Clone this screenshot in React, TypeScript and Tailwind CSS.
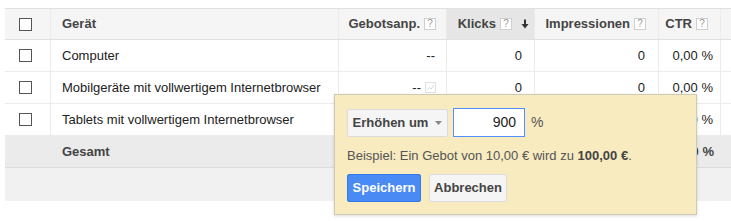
import React from 'react';

const font = { fontFamily: '"Liberation Sans", Arial, sans-serif' };

function Help() {
  return (
    <span className="ml-[4px] inline-flex h-[12px] w-[12px] items-center justify-center border border-[#cfcfcf] bg-white text-[10px] font-normal leading-none text-[#999]">
      ?
    </span>
  );
}

function SortArrow() {
  return (
    <svg width="8" height="10" viewBox="0 0 8 10" className="ml-[9px]">
      <path d="M4 0.5V8" stroke="#333" strokeWidth="2" />
      <path d="M0.5 5L4 9.5L7.5 5Z" fill="#333" />
    </svg>
  );
}

function ChartIcon() {
  return (
    <svg width="11" height="11" viewBox="0 0 11 11" className="ml-[4px]">
      <rect x="0.5" y="0.5" width="10" height="10" fill="none" stroke="#e0e0e0" />
      <path d="M2 8L4.5 5.5L6 7L9 3" fill="none" stroke="#d8d8d8" />
    </svg>
  );
}

function Checkbox() {
  return <span className="ml-[14px] block h-[13px] w-[13px] border border-[#555] bg-white" />;
}

const cols = 'grid grid-cols-[46px_288px_108px_88px_124px_62px_60px]';
const cell = 'flex items-center border-r border-[#ebebeb]';

// the last row's middle cells sit under the popup, so they stay empty
const rows = [
  { name: 'Computer', chart: false, covered: false },
  { name: 'Mobilgeräte mit vollwertigem Internetbrowser', chart: true, covered: false },
  { name: 'Tablets mit vollwertigem Internetbrowser', chart: false, covered: true },
];

export default function App() {
  return (
    <div className="relative h-[221px] w-[731px] overflow-hidden bg-white text-[13px] text-[#222]" style={font}>
      <div className="pl-[5px] pt-[8px]">
        <div className={`${cols} h-[32px] border-y border-[#e0e0e0] bg-[#f5f5f5] font-bold text-[#444]`}>
          <div className={cell}>
            <Checkbox />
          </div>
          <div className={`${cell} pl-[11px]`}>Gerät</div>
          <div className={`${cell} justify-end pr-[10px]`}>
            Gebotsanp.<Help />
          </div>
          <div className={`${cell} justify-end bg-[#e6e6e6] pr-[5px]`}>
            Klicks<Help />
            <SortArrow />
          </div>
          <div className={`${cell} justify-end pr-[12px]`}>
            Impressionen<Help />
          </div>
          <div className={`${cell} justify-end pr-[12px]`}>
            CTR<Help />
          </div>
          <div className={cell} />
        </div>

        {rows.map((r) => (
          <div key={r.name} className={`${cols} h-[32px] border-b border-[#ebebeb] bg-white`}>
            <div className={cell}>
              <Checkbox />
            </div>
            <div className={`${cell} pl-[11px]`}>{r.name}</div>
            <div className={`${cell} justify-end ${r.chart ? 'pr-[10px]' : 'pr-[11px]'}`}>
              {!r.covered && '--'}
              {r.chart && <ChartIcon />}
            </div>
            <div className={`${cell} justify-end pr-[12px]`}>{!r.covered && '0'}</div>
            <div className={`${cell} justify-end pr-[13px]`}>{!r.covered && '0'}</div>
            <div className={`${cell} justify-end pr-[7px]`}>0,00 %</div>
            <div className={cell} />
          </div>
        ))}

        <div className={`${cols} h-[32px] border-b border-[#dcdcdc] bg-[#ebebeb] font-bold text-[#444]`}>
          <div />
          <div className="flex items-center pl-[11px]">Gesamt</div>
          <div />
          <div />
          <div />
          <div className="flex items-center justify-end pr-[7px]">0,00 %</div>
          <div />
        </div>
        <div className="h-[33px] bg-[#f1f1f1]" />
      </div>

      <div className="absolute left-[334px] top-[94px] h-[121px] w-[363px] border border-[#cfcab4] bg-[#f8ebc0] pl-[12px] pt-[13px] shadow-[0_1px_3px_rgba(0,0,0,0.15)]">
        <div className="flex items-center">
          <button className="flex h-[28px] w-[101px] items-center justify-center rounded-[2px] border border-[#dcdcdc] bg-[#f5f5f5] font-bold text-[#444]">
            Erhöhen um
            <svg width="7" height="4" viewBox="0 0 7 4" className="ml-[7px]">
              <path d="M0 0H7L3.5 4Z" fill="#888" />
            </svg>
          </button>
          <div className="ml-[5px] flex h-[29px] w-[72px] items-center justify-end border border-[#4d90fe] bg-white pr-[8px] text-[14px] text-[#222]">
            900
          </div>
          <span className="ml-[6px] text-[14px] text-[#555]">%</span>
        </div>
        <div className="mt-[9px] text-[13px] leading-[20px] text-[#555]">
          Beispiel: Ein Gebot von 10,00 € wird zu <b className="text-[#444]">100,00 €</b>.
        </div>
        <div className="mt-[8px] flex items-center">
          <button className="flex h-[28px] w-[74px] items-center justify-center rounded-[2px] border border-[#3079ed] bg-[#4a8af4] font-bold text-white">
            Speichern
          </button>
          <button className="ml-[8px] flex h-[28px] w-[78px] items-center justify-center rounded-[2px] border border-[#dcdcdc] bg-[#f5f5f5] font-bold text-[#444]">
            Abbrechen
          </button>
        </div>
      </div>
    </div>
  );
}
